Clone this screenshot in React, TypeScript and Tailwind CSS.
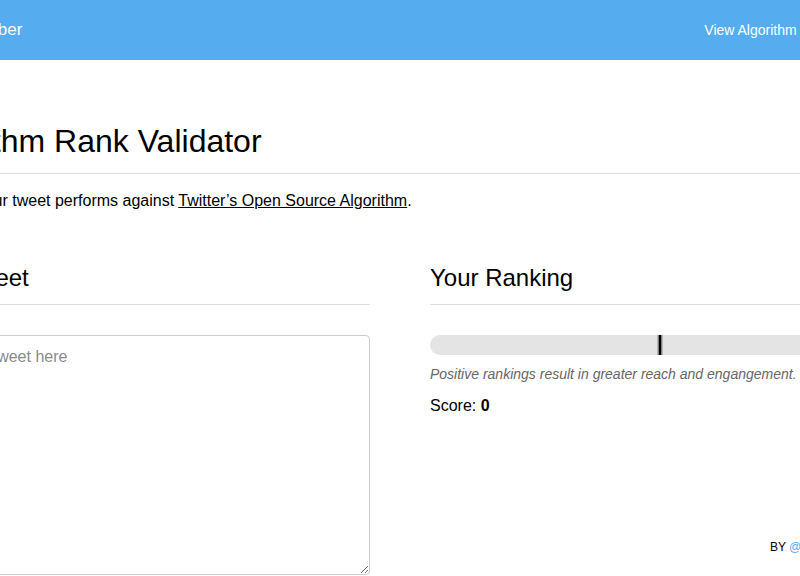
export default function App() {
  return (
    <div className="min-h-screen overflow-hidden bg-white font-['Liberation_Sans',Arial,sans-serif] text-black">
      <header className="flex h-[60px] justify-center bg-[#55acee]">
        <div className="flex w-[980px] shrink-0 items-center justify-between">
          <span className="text-[17px] text-white">Tweet Grabber</span>
          <nav className="flex gap-[15px] text-[14px] text-white">
            <a href="#">View Algorithm</a>
            <a href="#">View Source</a>
          </nav>
        </div>
      </header>

      <main className="flex justify-center">
        <div className="w-[980px] shrink-0 pt-[62px]">
          <h1 className="text-[32px] leading-[38px]">Algorithm Rank Validator</h1>
          <hr className="mt-[13px] border-[#dddddd]" />
          <p className="mt-[15px] text-[16px] leading-6">
            See how your tweet performs against{" "}
            <a href="#" className="underline">
              Twitter’s Open Source Algorithm
            </a>
            .
          </p>

          <div className="mt-[50px] grid grid-cols-2 gap-[60px]">
            <div>
              <h2 className="text-[24px] leading-[29px]">Your Tweet</h2>
              <hr className="mt-[12px] border-[#dddddd]" />
              <textarea
                placeholder="Type your tweet here"
                className="mt-[30px] block h-[240px] w-full rounded-[4px] border border-[#cccccc] pt-[9px] pr-3 pb-2 pl-[7px] text-[16px] leading-6 outline-none placeholder:text-[#8a8a8a]"
              />
            </div>

            <div className="flex flex-col">
              <h2 className="text-[24px] leading-[29px]">Your Ranking</h2>
              <hr className="mt-[12px] border-[#dddddd]" />
              <div className="relative mt-[30px] h-5 rounded-full bg-[#e4e4e4]">
                <div className="absolute top-0 left-1/2 h-full w-[5px] -translate-x-1/2 border-x border-white bg-black" />
              </div>
              <p className="mt-[9px] text-[14px] leading-5 text-[#666666] italic">
                Positive rankings result in greater reach and engangement.
              </p>
              <p className="mt-[10px] text-[16px] leading-6">
                Score: <span className="font-bold">0</span>
              </p>
              <div className="mt-auto pb-5 text-right text-[12px] leading-4">
                BY <a href="#" className="text-[#55acee]">@rankvalidatorapp</a>
              </div>
            </div>
          </div>
        </div>
      </main>
    </div>
  );
}
